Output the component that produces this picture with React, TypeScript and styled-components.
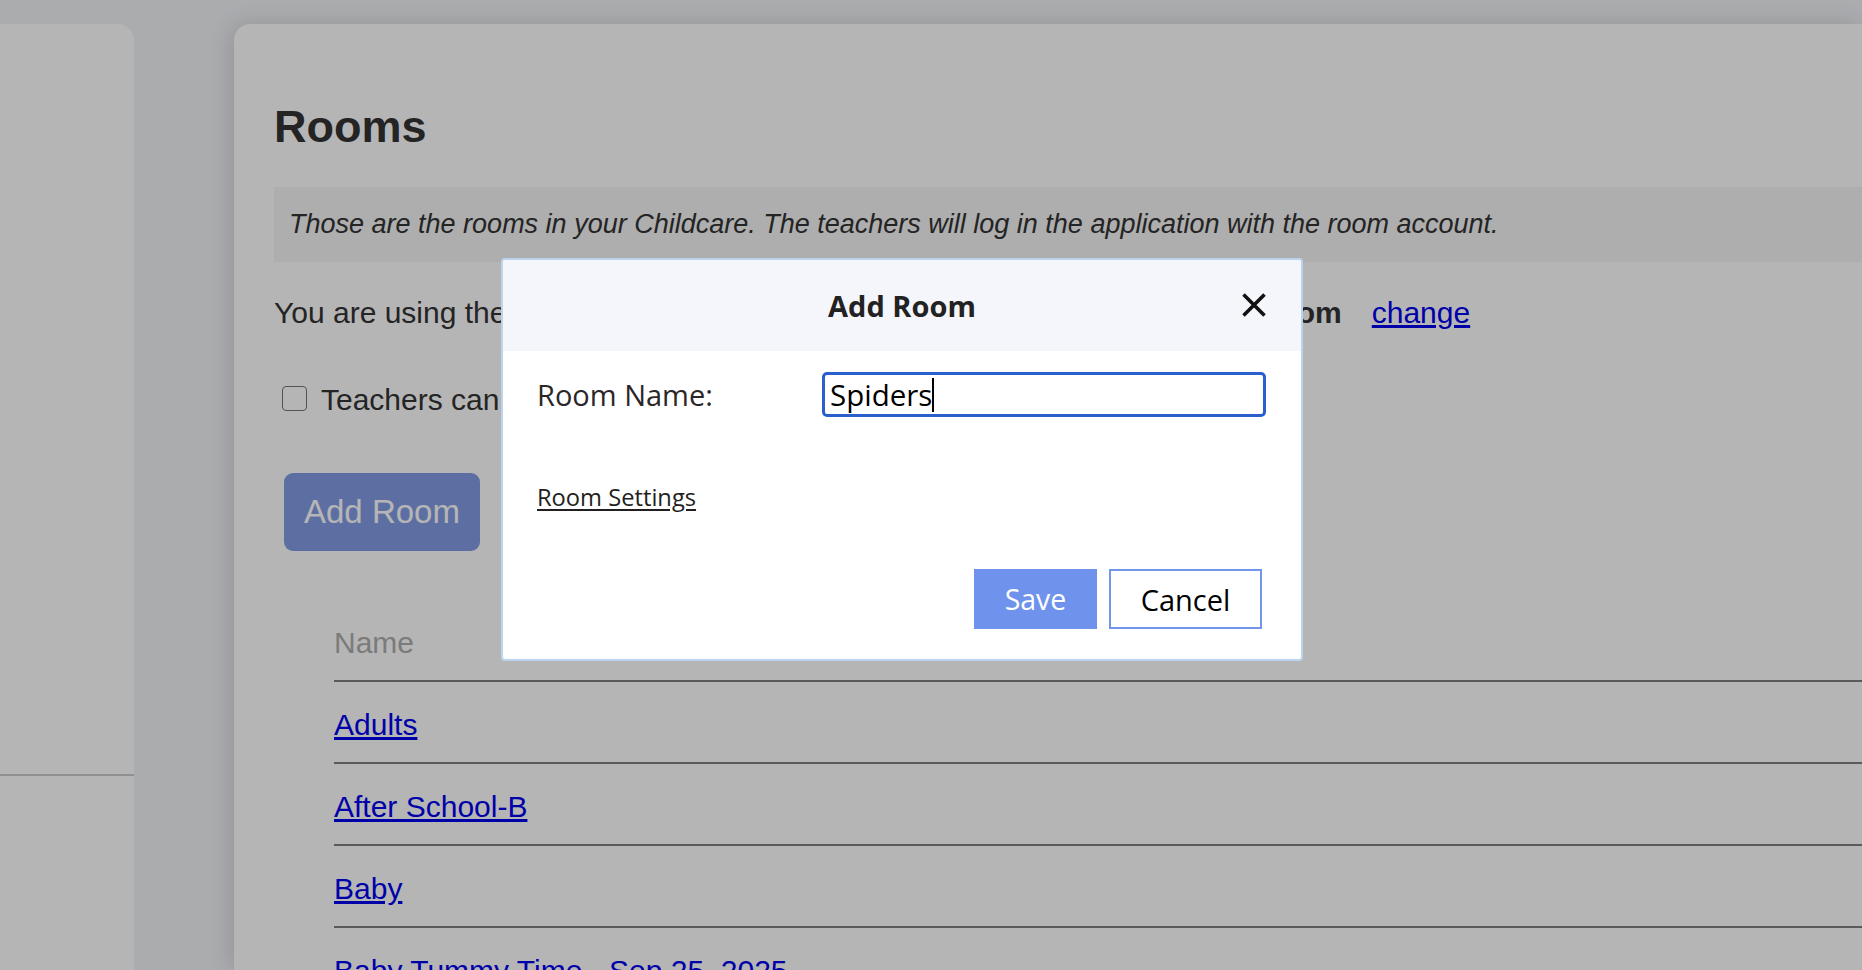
import React from "react";
import styled, { createGlobalStyle } from "styled-components";

const GlobalStyle = createGlobalStyle`
  html, body {
    margin: 0;
    padding: 0;
    background: #f1f2f6;
    overflow: hidden;
  }
  body {
    font-family: "Liberation Sans", Arial, Helvetica, sans-serif;
    color: #333;
  }
  * { box-sizing: border-box; }
`;

const Page = styled.div`
  display: flex;
  gap: 100px;
  padding-top: 24px;
  height: 100vh;
`;

const Sidebar = styled.aside`
  width: 134px;
  flex: none;
  background: #ffffff;
  border-top-right-radius: 16px;
  display: flex;
  flex-direction: column;
`;

const SidebarTop = styled.div`
  height: 752px;
  border-bottom: 2px solid #cbcbcb;
`;

const Main = styled.main`
  flex: 1;
  background: #ffffff;
  border-top-left-radius: 16px;
  padding: 80px 0 0 40px;
  box-shadow: -4px 0 22px rgba(0, 0, 0, 0.13);
  overflow: hidden;
`;

const Title = styled.h1`
  margin: 0;
  font-size: 45px;
  line-height: 45px;
  font-weight: 700;
  color: #333;
`;

const Notice = styled.p`
  margin: 38px 0 0;
  height: 75px;
  line-height: 75px;
  padding: 0 15px;
  background: #f5f5f5;
  font-size: 27px;
  font-style: italic;
  color: #333;
  white-space: nowrap;
`;

const PlanLine = styled.div`
  margin-top: 33px;
  font-size: 30px;
  line-height: 36px;
  white-space: nowrap;
  b { font-weight: 700; }
`;

const Link = styled.a`
  color: #0000ee;
  text-decoration: underline;
  cursor: pointer;
`;

const ChangeLink = styled(Link)`
  margin-left: 30px;
`;

const CheckRow = styled.label`
  margin-top: 51px;
  display: flex;
  align-items: flex-start;
  font-size: 30px;
  line-height: 36px;
  white-space: nowrap;
`;

const CheckBox = styled.input`
  appearance: none;
  width: 25px;
  height: 25px;
  margin: 4px 14px 0 8px;
  border: 1.5px solid #767676;
  border-radius: 4px;
  background: #fff;
  flex: none;
`;

const AddButton = styled.button`
  margin: 55px 0 0 10px;
  display: block;
  height: 78px;
  padding: 0 20px;
  border: none;
  border-radius: 9px;
  background: rgb(131, 157, 228);
  color: #ffffff;
  font-family: "Liberation Sans", Arial, sans-serif;
  font-size: 33px;
  line-height: 78px;
`;

const Table = styled.table`
  margin: 55px 0 0 60px;
  width: calc(100% - 60px);
  border-collapse: separate;
  border-spacing: 0;
  font-size: 30px;
  line-height: 36px;
`;

const HeadCell = styled.th`
  text-align: left;
  font-weight: 400;
  color: #aeaeae;
  padding: 19px 0;
  border-bottom: 2px solid #7f7f7f;
`;

const Cell = styled.td`
  padding: 25px 0 19px;
  border-bottom: 2px solid #7f7f7f;
  white-space: nowrap;
`;

const Overlay = styled.div`
  position: fixed;
  inset: 0;
  background: rgba(0, 0, 0, 0.29);
`;

const Modal = styled.div`
  position: fixed;
  left: 501px;
  top: 258px;
  width: 802px;
  background: #ffffff;
  border: 2px solid #bcd3ee;
  border-radius: 4px;
  overflow: hidden;
  font-family: "Open Sans", "Noto Sans", sans-serif;
  color: #2b2b2b;
`;

const ModalHeader = styled.div`
  position: relative;
  height: 91px;
  background: #f4f6fb;
  text-align: center;
`;

const ModalTitle = styled.h2`
  margin: 0;
  font-size: 29px;
  line-height: 91px;
  font-weight: 700;
  color: #222;
`;

const CloseButton = styled.button`
  position: absolute;
  right: 32px;
  top: 30px;
  width: 30px;
  height: 30px;
  padding: 2px;
  border: none;
  background: transparent;
  display: flex;
  align-items: center;
  justify-content: center;
`;

const ModalBody = styled.div`
  padding: 21px 35px 30px 34px;
  display: flex;
  flex-direction: column;
`;

const FieldRow = styled.div`
  display: grid;
  grid-template-columns: 285px 444px;
  align-items: center;
`;

const FieldLabel = styled.label`
  font-size: 29px;
  line-height: 45px;
  color: #2b2628;
`;

const InputWrap = styled.div`
  position: relative;
`;

const TextInput = styled.input`
  display: block;
  width: 444px;
  height: 45px;
  border: 3px solid #2b5fce;
  border-radius: 5px;
  padding: 0 5px;
  font-family: "Open Sans", "Noto Sans", sans-serif;
  font-size: 29.5px;
  color: #000;
  background: #fff;
  outline: none;
`;

const Caret = styled.span`
  position: absolute;
  left: 110px;
  top: 6px;
  width: 2px;
  height: 34px;
  background: #000;
`;

const SettingsLink = styled.a`
  margin-top: 65px;
  align-self: flex-start;
  font-size: 23.7px;
  line-height: 31px;
  color: #231f20;
  text-decoration: underline;
  text-underline-offset: 3px;
`;

const Actions = styled.div`
  margin-top: 56px;
  padding-right: 4px;
  display: flex;
  justify-content: flex-end;
  gap: 12px;
`;

const SaveButton = styled.button`
  width: 123px;
  height: 60px;
  border: none;
  background: #6f93ec;
  color: #ffffff;
  font-family: "Open Sans", "Noto Sans", sans-serif;
  font-size: 28.5px;
  font-weight: 500;
  padding: 0;
`;

const CancelButton = styled.button`
  width: 153px;
  height: 60px;
  border: 2px solid #7196ea;
  background: #ffffff;
  color: #000;
  font-family: "Open Sans", "Noto Sans", sans-serif;
  font-size: 29px;
  padding: 0;
`;

const rooms = [
  "Adults",
  "After School-B",
  "Baby",
  "Baby Tummy Time - Sep 25, 2025",
  "Butterflies",
];

export default function App() {
  return (
    <>
      <GlobalStyle />
      <Page>
        <Sidebar>
          <SidebarTop />
        </Sidebar>
        <Main>
          <Title>Rooms</Title>
          <Notice>
            Those are the rooms in your Childcare. The teachers will log in the
            application with the room account.
          </Notice>
          <PlanLine>
            You are using the Starter Subscription plan, which allows a maximum
            of: <b>1 room</b>
            <ChangeLink>change</ChangeLink>
          </PlanLine>
          <CheckRow>
            <CheckBox type="checkbox" />
            Teachers can add and edit children
          </CheckRow>
          <AddButton>Add Room</AddButton>
          <Table>
            <thead>
              <tr>
                <HeadCell>Name</HeadCell>
              </tr>
            </thead>
            <tbody>
              {rooms.map((r) => (
                <tr key={r}>
                  <Cell>
                    <Link>{r}</Link>
                  </Cell>
                </tr>
              ))}
            </tbody>
          </Table>
        </Main>
      </Page>
      <Overlay />
      <Modal role="dialog">
        <ModalHeader>
          <ModalTitle>Add Room</ModalTitle>
          <CloseButton aria-label="Close">
            <svg width="26" height="26" viewBox="0 0 26 26">
              <path
                d="M2.5 2.5 L23.5 23.5 M23.5 2.5 L2.5 23.5"
                stroke="#111"
                strokeWidth="3.6"
                strokeLinecap="butt"
                fill="none"
              />
            </svg>
          </CloseButton>
        </ModalHeader>
        <ModalBody>
          <FieldRow>
            <FieldLabel>Room Name:</FieldLabel>
            <InputWrap>
              <TextInput defaultValue="Spiders" />
              <Caret />
            </InputWrap>
          </FieldRow>
          <SettingsLink>Room Settings</SettingsLink>
          <Actions>
            <SaveButton>Save</SaveButton>
            <CancelButton>Cancel</CancelButton>
          </Actions>
        </ModalBody>
      </Modal>
    </>
  );
}
